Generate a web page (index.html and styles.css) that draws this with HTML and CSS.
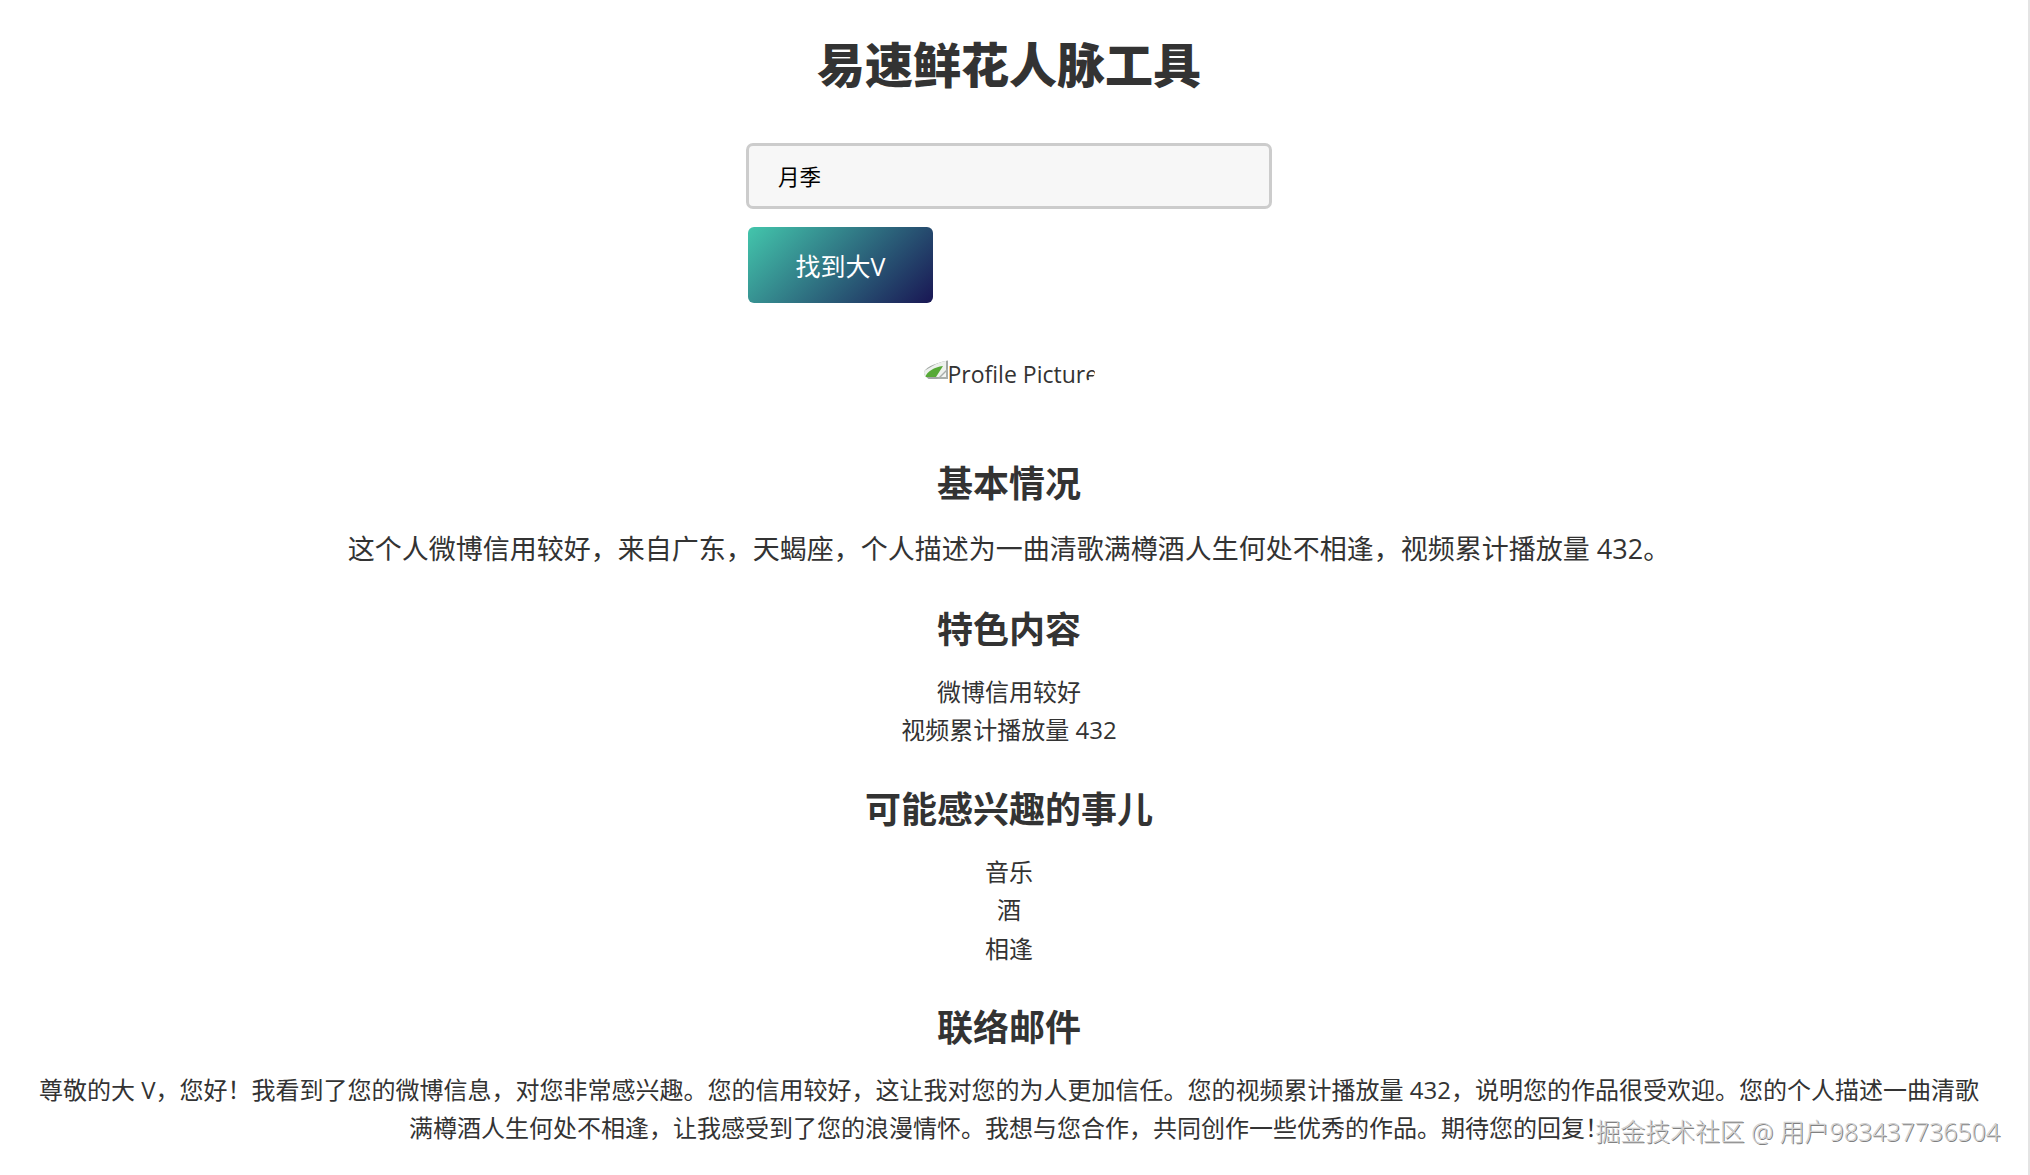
FILE: index.html
```html
<!DOCTYPE html>
<html lang="zh-CN">
<head>
<meta charset="utf-8">
<title>易速鲜花人脉工具</title>
<link rel="stylesheet" href="styles.css">
</head>
<body>
<main class="page">
  <h1 class="title">易速鲜花人脉工具</h1>
  <form class="search">
    <input class="search-input" type="text" value="月季">
    <button class="search-btn" type="button">找到大V</button>
  </form>
  <div class="profile-pic">
    <svg class="broken" width="24" height="24" viewBox="0 0 24 24" aria-hidden="true">
      <path d="M0 0 H24 V24 H0Z" fill="#9fa5a1"/>
      <path d="M0 16 L12 9 L22 5 V22 H0Z" fill="#eef1ee"/>
      <path d="M1 22 C3 17 10 12 19 11 L12 22Z" fill="#56a936"/>
      <path d="M13 24 L24 13 V24Z" fill="#a9aeab"/>
      <path d="M17 22 L22 17 V22Z" fill="#f3f5f3"/>
    </svg>
    <span class="alt">Profile Picture</span>
  </div>
  <section class="block block-first">
    <h2 class="heading">基本情况</h2>
    <p class="line lead">这个人微博信用较好，来自广东，天蝎座，个人描述为一曲清歌满樽酒人生何处不相逢，视频累计播放量 432。</p>
  </section>
  <section class="block">
    <h2 class="heading">特色内容</h2>
    <p class="line">微博信用较好</p>
    <p class="line">视频累计播放量 432</p>
  </section>
  <section class="block">
    <h2 class="heading">可能感兴趣的事儿</h2>
    <p class="line">音乐</p>
    <p class="line">酒</p>
    <p class="line">相逢</p>
  </section>
  <section class="block">
    <h2 class="heading">联络邮件</h2>
    <p class="line">尊敬的大 V，您好！我看到了您的微博信息，对您非常感兴趣。您的信用较好，这让我对您的为人更加信任。您的视频累计播放量 432，说明您的作品很受欢迎。您的个人描述一曲清歌满樽酒人生何处不相逢，让我感受到了您的浪漫情怀。我想与您合作，共同创作一些优秀的作品。期待您的回复！</p>
  </section>
</main>
<div class="watermark">掘金技术社区 @ 用户983437736504</div>
</body>
</html>
```
FILE: styles.css
```css
html, body {
  margin: 0;
  padding: 0;
  height: 100%;
  background: #fff;
}
body {
  overflow: hidden;
  box-sizing: border-box;
  border-right: 2px solid #e4e4e4;
  font-family: "Open Sans", "Noto Sans CJK SC", sans-serif;
  color: #333;
}
.page {
  padding: 0 46px 0 36px;
  text-align: center;
}
.title {
  margin: 0;
  padding-top: 32px;
  font-size: 48px;
  line-height: 65px;
  font-weight: 900;
  color: #333;
}
.search {
  width: 526px;
  margin: 46px auto 0;
  text-align: left;
}
.search-input {
  display: block;
  box-sizing: border-box;
  width: 526px;
  height: 66px;
  padding: 0 28px 2px 29px;
  border: 3px solid #ccc;
  border-radius: 7px;
  background: #f7f7f7;
  color: #000;
  font: 21.5px "Open Sans", "Noto Sans CJK SC", sans-serif;
}
.search-btn {
  display: block;
  width: 185px;
  height: 76px;
  margin: 18px 0 0 2px;
  padding: 0 0 1px;
  border: 0;
  border-radius: 6px;
  background: linear-gradient(135deg, #43c6ac 0%, #191654 100%);
  color: #fff;
  font: 25px "Open Sans", "Noto Sans CJK SC", sans-serif;
}
.profile-pic {
  display: flex;
  width: 171px;
  height: 36px;
  margin: 52px auto 0;
  overflow: hidden;
  border-radius: 50%;
  font-size: 23px;
  line-height: 38px;
  white-space: nowrap;
}
.broken {
  flex: none;
}
.heading {
  margin: 0;
  padding-top: 32px;
  font-size: 36px;
  line-height: 56px;
  font-weight: 700;
  color: #333;
}
.block-first .heading {
  padding-top: 65px;
}
.line {
  margin: 0;
  font-size: 24px;
  line-height: 38.4px;
}
.block .line:first-of-type {
  margin-top: 15px;
}
.block .lead {
  font-size: 27px;
  line-height: 43px;
}
.watermark {
  position: absolute;
  right: 30px;
  bottom: 28px;
  font-size: 24.9px;
  line-height: 32px;
  font-weight: 300;
  color: #d0d0d0;
  text-shadow: 1px 1px 0 #808080;
}
```
